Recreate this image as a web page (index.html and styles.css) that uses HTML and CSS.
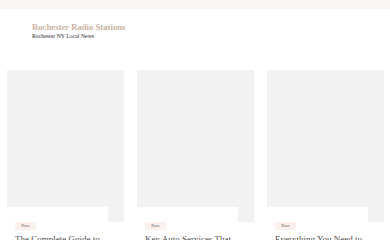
FILE: index.html
```html
<!DOCTYPE html>
<html lang="en">
<head>
    <meta charset="UTF-8">
    <meta name="viewport" content="width=device-width, initial-scale=1.0">
    <title>Rochester Radio Stations</title>
    <link rel="stylesheet" href="styles.css">
</head>
<body>
    <div class="topbar"></div>
    <header class="brand">
        <div class="site-title">Rochester Radio Stations</div>
        <div class="tagline">Rochester NY Local News</div>
    </header>

    <main class="cards">
        <article class="card">
            <div class="thumb"></div>
            <div class="card-body">
                <span class="badge">News</span>
                <h2>The Complete Guide to</h2>
            </div>
        </article>
        <article class="card">
            <div class="thumb"></div>
            <div class="card-body">
                <span class="badge">News</span>
                <h2>Key Auto Services That</h2>
            </div>
        </article>
        <article class="card">
            <div class="thumb"></div>
            <div class="card-body">
                <span class="badge">News</span>
                <h2>Everything You Need to</h2>
            </div>
        </article>
    </main>
</body>
</html>
```

FILE: styles.css
```css
body {
    margin: 0;
    background: #ffffff;
    font-family: "Liberation Serif", serif;
    overflow: hidden;
}

.topbar {
    height: 9px;
    background: #f9f6f3;
}

.brand {
    padding: 13px 32px 0;
    height: 48px;
    box-sizing: border-box;
}

.site-title {
    font-size: 8.7px;
    font-weight: bold;
    color: #c9b29f;
    line-height: 11px;
}

.tagline {
    font-size: 5.8px;
    color: #2b2b2b;
    line-height: 7px;
}

.cards {
    display: grid;
    grid-template-columns: repeat(3, 117px);
    gap: 13px;
    padding: 13px 7px 0;
}

.thumb {
    height: 152px;
    background: #f2f2f2;
}

.card-body {
    position: relative;
    width: 101px;
    margin-top: -15px;
    background: #ffffff;
    padding: 15px 8px 0;
    box-sizing: border-box;
}

.badge {
    display: block;
    width: fit-content;
    background: #fcf0ed;
    color: #555;
    font-size: 4px;
    font-style: italic;
    line-height: 8px;
    padding: 0 6px;
}

h2 {
    margin: 4px 0 0;
    font-size: 9px;
    font-weight: normal;
    color: #4a4a4a;
    line-height: 11px;
    white-space: nowrap;
}
```
